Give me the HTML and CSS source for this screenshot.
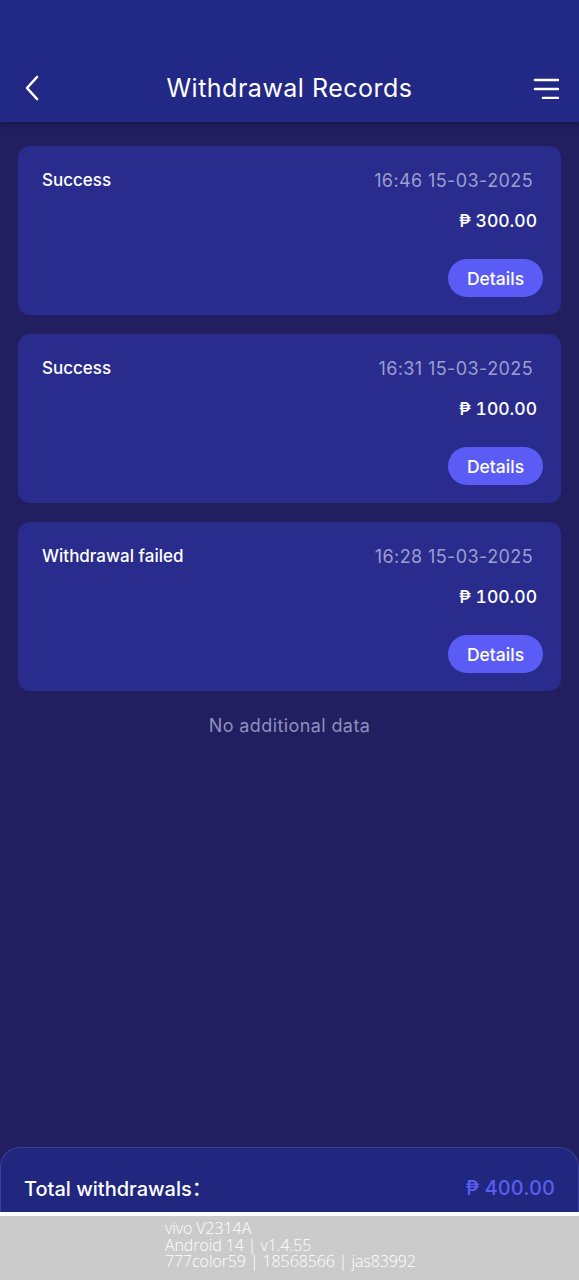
FILE: index.html
```html
<!DOCTYPE html>
<html lang="en">
<head>
    <meta charset="UTF-8">
    <meta name="viewport" content="width=device-width, initial-scale=1.0">
    <title>Withdrawal Records</title>
    <link rel="stylesheet" href="styles.css">
</head>
<body>
    <div class="page">
        <header class="topBar">
            <div class="topRow">
                <span class="backBtn">
                    <svg width="16" height="26" viewBox="0 0 16 26">
                        <path d="M13 2 L3 13 L13 24" fill="none" stroke="#fff" stroke-width="2.6" stroke-linecap="round" stroke-linejoin="round"/>
                    </svg>
                </span>
                <h1 class="title">Withdrawal Records</h1>
                <span class="menuBtn">
                    <svg width="26" height="22" viewBox="0 0 26 22">
                        <line x1="2" y1="3" x2="25" y2="3" stroke="#fff" stroke-width="2.6" stroke-linecap="round"/>
                        <line x1="2" y1="12" x2="25" y2="12" stroke="#fff" stroke-width="2.6" stroke-linecap="round"/>
                        <line x1="10" y1="21" x2="25" y2="21" stroke="#fff" stroke-width="2.6" stroke-linecap="round"/>
                    </svg>
                </span>
            </div>
        </header>

        <main class="recordList">
            <div class="recordCard">
                <div class="recordHead">
                    <span class="recordStatus">Success</span>
                    <span class="recordTime">16:46 15-03-2025</span>
                </div>
                <div class="recordAmount">₱ 300.00</div>
                <div class="recordFoot"><button class="detailsBtn">Details</button></div>
            </div>

            <div class="recordCard">
                <div class="recordHead">
                    <span class="recordStatus">Success</span>
                    <span class="recordTime">16:31 15-03-2025</span>
                </div>
                <div class="recordAmount">₱ 100.00</div>
                <div class="recordFoot"><button class="detailsBtn">Details</button></div>
            </div>

            <div class="recordCard">
                <div class="recordHead">
                    <span class="recordStatus">Withdrawal failed</span>
                    <span class="recordTime">16:28 15-03-2025</span>
                </div>
                <div class="recordAmount">₱ 100.00</div>
                <div class="recordFoot"><button class="detailsBtn">Details</button></div>
            </div>

            <p class="noMore">No additional data</p>
        </main>

        <div class="totalBar">
            <span class="totalLabel">Total withdrawals：</span>
            <span class="totalValue">₱ 400.00</span>
        </div>

        <div class="deviceInfo">
            <div>vivo V2314A</div>
            <div>Android 14 | v1.4.55</div>
            <div>777color59 | 18568566 | jas83992</div>
        </div>
    </div>
</body>
</html>
```

FILE: styles.css
```css
* {
    box-sizing: border-box;
}

body {
    margin: 0;
    background-color: #211f5f;
    font-family: Inter, "Noto Sans", sans-serif;
    color: #fff;
}

.page {
    display: flex;
    flex-direction: column;
    height: 1280px;
}

.topBar {
    background-color: #222886;
    padding: 64px 20px 10px 20px;
    box-shadow: 0 2px 6px rgba(10, 10, 50, 0.5);
}

.topRow {
    height: 48px;
    display: flex;
    align-items: center;
    justify-content: space-between;
}

.backBtn, .menuBtn {
    width: 40px;
    display: flex;
    align-items: center;
}

.backBtn {
    padding-left: 4px;
}

.menuBtn {
    justify-content: flex-end;
}

.backBtn svg, .menuBtn svg {
    display: block;
}

.title {
    margin: 0;
    font-size: 25px;
    font-weight: 400;
    letter-spacing: 0.5px;
}

.recordList {
    flex: 1;
    padding: 24px 18px 0 18px;
    display: flex;
    flex-direction: column;
    gap: 19px;
}

.recordCard {
    background-color: #292c8d;
    border-radius: 12px;
    padding: 22px 18px 18px 24px;
    display: flex;
    flex-direction: column;
}

.recordHead {
    display: flex;
    justify-content: space-between;
    align-items: center;
    height: 24px;
    padding-right: 10px;
}

.recordStatus {
    font-size: 17px;
    font-weight: 500;
}

.recordTime {
    font-size: 18px;
    color: #9c9dd0;
    letter-spacing: 0.4px;
}

.recordAmount {
    margin-top: 17px;
    height: 24px;
    line-height: 24px;
    text-align: right;
    font-size: 17.5px;
    font-weight: 500;
    padding-right: 6px;
    font-variant-numeric: tabular-nums;
}

.recordFoot {
    margin-top: 26px;
    display: flex;
    justify-content: flex-end;
}

.detailsBtn {
    width: 95px;
    height: 38px;
    border: none;
    border-radius: 19px;
    background-color: #5a5cf5;
    color: #fff;
    font-family: inherit;
    font-size: 17.5px;
    font-weight: 500;
}

.noMore {
    margin: 5px 0 0 0;
    text-align: center;
    font-size: 18px;
    color: #8e8fbd;
    letter-spacing: 0.4px;
}

.totalBar {
    height: 65px;
    background-color: #21267f;
    border: 1px solid #3a3f9c;
    border-bottom: none;
    border-radius: 20px 20px 0 0;
    display: flex;
    align-items: center;
    justify-content: space-between;
    padding: 15px 23px 0 23px;
}

.totalLabel {
    font-family: Inter, "Noto Sans CJK SC", sans-serif;
    font-size: 20px;
    font-weight: 500;
}

.totalValue {
    font-size: 20px;
    font-weight: 500;
    color: #5a5ef0;
    font-variant-numeric: tabular-nums;
}

.deviceInfo {
    height: 68px;
    border-top: 4px solid #fff;
    background-color: #cbcbcb;
    padding: 4px 0 0 165px;
    font-family: "Open Sans", sans-serif;
    font-weight: 300;
    font-size: 16px;
    line-height: 16.5px;
    color: #fff;
    letter-spacing: -0.1px;
}
```
